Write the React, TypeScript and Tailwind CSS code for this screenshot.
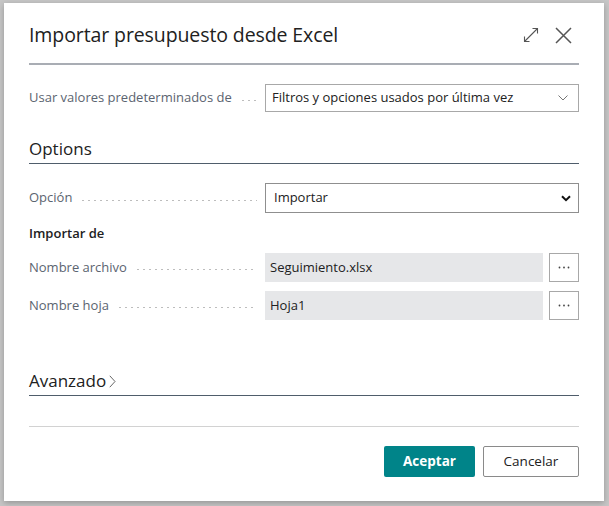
import React from "react";

const font = { fontFamily: '"Open Sans", "Noto Sans", sans-serif' };

function Leader() {
  return (
    <div className="flex-1 h-[3px] mx-[8px] mt-[4px] bg-[radial-gradient(circle,#bdbdbd_0.7px,transparent_1px)] bg-[length:6px_3px] bg-repeat-x" />
  );
}

function Label({ text }: { text: string }) {
  return (
    <div className="w-[236px] flex items-center shrink-0">
      <span className="text-[13px] text-[#5b6470] whitespace-nowrap">{text}</span>
      <Leader />
    </div>
  );
}

function Dots() {
  return (
    <svg width="12" height="3" viewBox="0 0 12 3">
      <circle cx="1.5" cy="1.5" r="0.9" fill="#444" />
      <circle cx="6" cy="1.5" r="0.9" fill="#444" />
      <circle cx="10.5" cy="1.5" r="0.9" fill="#444" />
    </svg>
  );
}

export default function App() {
  return (
    <div
      className="w-[609px] h-[506px] overflow-hidden bg-[#c6c6c6] pt-[3px] pl-[4px]"
      style={font}
    >
      <div className="w-[600px] h-[498px] bg-white shadow-[0_2px_6px_rgba(0,0,0,0.25)] flex flex-col px-[25px]">
        {/* Header */}
        <div className="h-[62px] pt-[4px] flex items-center justify-between border-b-2 border-[#a9adb4] shrink-0">
          <h1 className="text-[19.5px] text-[#212121] leading-none tracking-[-0.1px]">
            Importar presupuesto desde Excel
          </h1>
          <div className="flex items-center gap-[16px] mr-[7px]">
            <svg width="16" height="16" viewBox="0 0 16 16" fill="none" stroke="#555" strokeWidth="1.1">
              <path d="M1.5 14.5 L14.5 1.5" />
              <path d="M9.5 1.5 H14.5 V6.5" />
              <path d="M1.5 9.5 V14.5 H6.5" />
            </svg>
            <svg width="17" height="17" viewBox="0 0 17 17" fill="none" stroke="#555" strokeWidth="1.5">
              <path d="M1 1 L16 16 M16 1 L1 16" />
            </svg>
          </div>
        </div>

        {/* Row 1 */}
        <div className="flex items-center mt-[19px]">
          <Label text="Usar valores predeterminados de" />
          <div className="flex-1 h-[28px] border border-[#a8a8a8] flex items-center justify-between pl-[6px] pr-[10px]">
            <span className="text-[13px] text-[#212121]">Filtros y opciones usados por última vez</span>
            <svg width="10" height="6" viewBox="0 0 10 6" fill="none" stroke="#666" strokeWidth="0.9">
              <path d="M0.5 0.5 L5 5 L9.5 0.5" />
            </svg>
          </div>
        </div>

        {/* Options */}
        <div className="mt-[25px] pb-[2px] border-b border-[#4f5d6b]">
          <h2 className="text-[17px] leading-[24px] text-[#212121]">Options</h2>
        </div>

        <div className="flex items-center mt-[19px]">
          <Label text="Opción" />
          <div className="flex-1 h-[30px] border border-[#8f8f8f] flex items-center justify-between pl-[8px] pr-[7px]">
            <span className="text-[13px] text-[#212121]">Importar</span>
            <svg width="10" height="7" viewBox="0 0 10 7" fill="none" stroke="#111" strokeWidth="2">
              <path d="M1 1.2 L5 5.2 L9 1.2" />
            </svg>
          </div>
        </div>

        <div className="mt-[11px] h-[20px] flex items-center text-[13px] font-semibold text-[#212121]">
          Importar de
        </div>

        <div className="flex items-center mt-[9px]">
          <Label text="Nombre archivo" />
          <div className="flex-1 h-[29px] bg-[#e6e7e9] flex items-center pl-[5px]">
            <span className="text-[13px] text-[#212121]">Seguimiento.xlsx</span>
          </div>
          <button className="ml-[6px] w-[30px] h-[29px] border border-[#a8a8a8] bg-white flex items-center justify-center">
            <Dots />
          </button>
        </div>

        <div className="flex items-center mt-[9px]">
          <Label text="Nombre hoja" />
          <div className="flex-1 h-[29px] bg-[#e6e7e9] flex items-center pl-[5px]">
            <span className="text-[13px] text-[#212121]">Hoja1</span>
          </div>
          <button className="ml-[6px] w-[30px] h-[29px] border border-[#a8a8a8] bg-white flex items-center justify-center">
            <Dots />
          </button>
        </div>

        {/* Avanzado */}
        <div className="mt-[49px] pb-[2px] border-b border-[#4f5d6b] flex items-center gap-[3px]">
          <h2 className="text-[17px] leading-[24px] text-[#212121]">Avanzado</h2>
          <svg width="7" height="13" viewBox="0 0 7 13" fill="none" stroke="#555" strokeWidth="0.9">
            <path d="M0.8 0.8 L6 6.5 L0.8 12.2" />
          </svg>
        </div>

        <div className="mt-[30px] border-t border-[#d2d2d2]" />

        <div className="mt-[19px] flex justify-end gap-[8px]">
          <button className="w-[91px] h-[31px] bg-[#008489] rounded-[2px] text-white text-[13.5px] font-bold">
            Aceptar
          </button>
          <button className="w-[96px] h-[31px] bg-white border border-[#8a8a8a] rounded-[2px] text-[#212121] text-[13.5px]">
            Cancelar
          </button>
        </div>
      </div>
    </div>
  );
}
